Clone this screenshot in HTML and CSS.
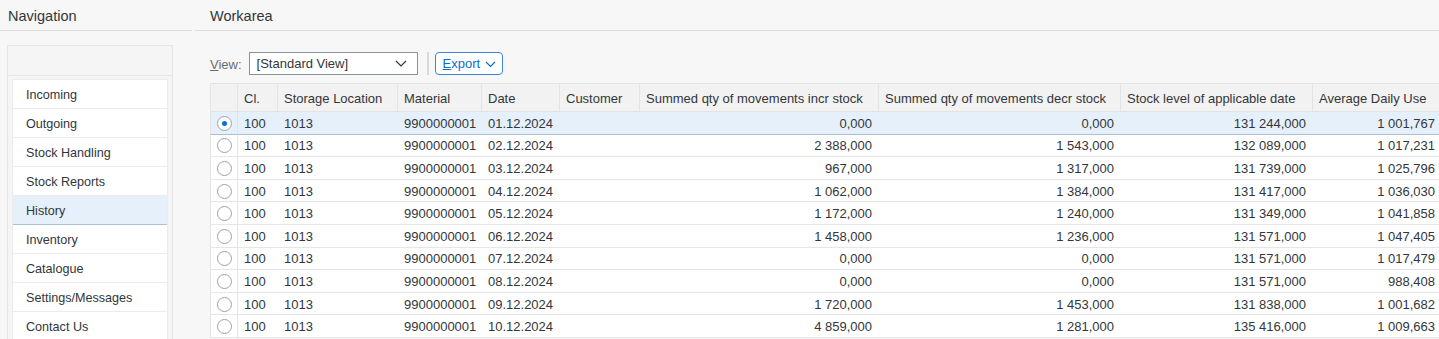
FILE: index.html
```html
<!DOCTYPE html>
<html lang="en">
<head>
<meta charset="utf-8">
<title>Stock History</title>
<link rel="stylesheet" href="styles.css">
</head>
<body>
<div class="page">
  <aside class="nav">
    <div class="pane-title">Navigation</div>
    <div class="nav-panel">
      <div class="nav-panel-head"></div>
      <ul class="nav-list">
        <li class="nav-item">Incoming</li>
        <li class="nav-item">Outgoing</li>
        <li class="nav-item">Stock Handling</li>
        <li class="nav-item">Stock Reports</li>
        <li class="nav-item nav-item-active">History</li>
        <li class="nav-item">Inventory</li>
        <li class="nav-item">Catalogue</li>
        <li class="nav-item">Settings/Messages</li>
        <li class="nav-item">Contact Us</li>
      </ul>
    </div>
  </aside>
  <main class="work">
    <div class="pane-title pane-title-work">Workarea</div>
    <div class="work-body">
      <div class="toolbar">
        <span class="view-label"><u>V</u>iew:</span>
        <div class="select">
          <span>[Standard View]</span>
          <svg class="chev" width="12" height="7" viewBox="0 0 12 7"><path d="M1 1 L6 6 L11 1" fill="none" stroke="#32363a" stroke-width="1.2"/></svg>
        </div>
        <span class="tb-sep"></span>
        <button class="btn-export"><span><u>E</u>xport</span><svg class="chev-sm" width="11" height="7" viewBox="0 0 11 7"><path d="M1 1 L5.5 5.5 L10 1" fill="none" stroke="#0a6ed1" stroke-width="1.2"/></svg></button>
      </div>
      <div class="table-wrap">
        <table class="grid">
          <colgroup>
            <col class="c-sel"><col class="c-cl"><col class="c-loc"><col class="c-mat"><col class="c-date"><col class="c-cust"><col class="c-incr"><col class="c-decr"><col class="c-lvl"><col class="c-avg">
          </colgroup>
          <thead>
            <tr>
              <th></th><th>Cl.</th><th>Storage Location</th><th>Material</th><th>Date</th><th>Customer</th><th>Summed qty of movements incr stock</th><th>Summed qty of movements decr stock</th><th>Stock level of applicable date</th><th>Average Daily Use</th>
            </tr>
          </thead>
          <tbody>
            <tr class="row-selected"><td class="sel"><span class="radio radio-on"></span></td><td>100</td><td>1013</td><td>9900000001</td><td>01.12.2024</td><td></td><td class="num">0,000</td><td class="num">0,000</td><td class="num">131 244,000</td><td class="num">1 001,767</td></tr>
            <tr><td class="sel"><span class="radio"></span></td><td>100</td><td>1013</td><td>9900000001</td><td>02.12.2024</td><td></td><td class="num">2 388,000</td><td class="num">1 543,000</td><td class="num">132 089,000</td><td class="num">1 017,231</td></tr>
            <tr><td class="sel"><span class="radio"></span></td><td>100</td><td>1013</td><td>9900000001</td><td>03.12.2024</td><td></td><td class="num">967,000</td><td class="num">1 317,000</td><td class="num">131 739,000</td><td class="num">1 025,796</td></tr>
            <tr><td class="sel"><span class="radio"></span></td><td>100</td><td>1013</td><td>9900000001</td><td>04.12.2024</td><td></td><td class="num">1 062,000</td><td class="num">1 384,000</td><td class="num">131 417,000</td><td class="num">1 036,030</td></tr>
            <tr><td class="sel"><span class="radio"></span></td><td>100</td><td>1013</td><td>9900000001</td><td>05.12.2024</td><td></td><td class="num">1 172,000</td><td class="num">1 240,000</td><td class="num">131 349,000</td><td class="num">1 041,858</td></tr>
            <tr><td class="sel"><span class="radio"></span></td><td>100</td><td>1013</td><td>9900000001</td><td>06.12.2024</td><td></td><td class="num">1 458,000</td><td class="num">1 236,000</td><td class="num">131 571,000</td><td class="num">1 047,405</td></tr>
            <tr><td class="sel"><span class="radio"></span></td><td>100</td><td>1013</td><td>9900000001</td><td>07.12.2024</td><td></td><td class="num">0,000</td><td class="num">0,000</td><td class="num">131 571,000</td><td class="num">1 017,479</td></tr>
            <tr><td class="sel"><span class="radio"></span></td><td>100</td><td>1013</td><td>9900000001</td><td>08.12.2024</td><td></td><td class="num">0,000</td><td class="num">0,000</td><td class="num">131 571,000</td><td class="num">988,408</td></tr>
            <tr><td class="sel"><span class="radio"></span></td><td>100</td><td>1013</td><td>9900000001</td><td>09.12.2024</td><td></td><td class="num">1 720,000</td><td class="num">1 453,000</td><td class="num">131 838,000</td><td class="num">1 001,682</td></tr>
            <tr><td class="sel"><span class="radio"></span></td><td>100</td><td>1013</td><td>9900000001</td><td>10.12.2024</td><td></td><td class="num">4 859,000</td><td class="num">1 281,000</td><td class="num">135 416,000</td><td class="num">1 009,663</td></tr>
          </tbody>
        </table>
      </div>
    </div>
  </main>
</div>
</body>
</html>
```

FILE: styles.css
```css
html, body {
  margin: 0;
  padding: 0;
  background: #f7f7f7;
  overflow: hidden;
}
body {
  font-family: "Liberation Sans", Arial, sans-serif;
  color: #32363a;
  font-size: 13px;
}
.page {
  display: flex;
  width: 1439px;
  height: 339px;
  overflow: hidden;
}
.nav {
  width: 192px;
  flex: 0 0 192px;
  margin-right: 3px;
}
.work {
  flex: 1 1 auto;
  min-width: 0;
  overflow: hidden;
}
.pane-title {
  height: 30px;
  line-height: 32px;
  padding-left: 8px;
  font-size: 14.5px;
  border-bottom: 1px solid #dcdcdc;
}
.pane-title-work {
  padding-left: 15px;
}
.nav-panel {
  margin: 14px 0 0 7px;
  width: 164px;
  height: 320px;
  border: 1px solid #e6e6e6;
  background: #f5f5f5;
}
.nav-panel-head {
  height: 29px;
  border-bottom: 1px solid #e6e6e6;
}
.nav-list {
  list-style: none;
  margin: 3px 4px 0 4px;
  padding: 0;
  background: #fff;
  border: 1px solid #ececec;
  border-bottom: none;
}
.nav-item {
  height: 28px;
  line-height: 30px;
  padding-left: 13px;
  border-bottom: 1px solid #ececec;
  font-size: 12.6px;
}
.nav-item-active {
  background: #e5f0fa;
  border-bottom-color: #a9c2dc;
}
.work-body {
  padding-left: 15px;
}
.toolbar {
  display: flex;
  align-items: center;
  height: 23px;
  margin-top: 21px;
}
.view-label {
  color: #6a6d70;
  margin-right: 7px;
  position: relative;
  top: 1px;
}
.select {
  box-sizing: border-box;
  width: 169px;
  height: 23px;
  border: 1px solid #89919a;
  background: #fff;
  display: flex;
  align-items: center;
  justify-content: space-between;
  padding: 0 10px 0 7px;
}
.tb-sep {
  width: 2px;
  height: 23px;
  background: #d9d9d9;
  margin: 0 6px 0 9px;
}
.btn-export {
  box-sizing: border-box;
  height: 23px;
  width: 68px;
  border: 1px solid #3f84d2;
  border-radius: 4px;
  background: #fff;
  color: #0a6ed1;
  font: inherit;
  padding: 0 0 0 7px;
  display: flex;
  align-items: center;
  gap: 5px;
  cursor: pointer;
}
.chev-sm {
  margin-top: 1px;
}
.table-wrap {
  margin-top: 8px;
  width: 1300px;
}
.grid {
  border-collapse: separate;
  border-spacing: 0;
  table-layout: fixed;
  width: 1232px;
  font-size: 13px;
}
.c-sel { width: 28px; }
.c-cl { width: 40px; }
.c-loc { width: 120px; }
.c-mat { width: 84px; }
.c-date { width: 78px; }
.c-cust { width: 80px; }
.c-incr { width: 239px; }
.c-decr { width: 242px; }
.c-lvl { width: 192px; }
.c-avg { width: 129px; }
.grid th {
  box-sizing: border-box;
  height: 29px;
  background: #f2f2f2;
  border-top: 1px solid #e3e3e3;
  border-bottom: 1px solid #e3e3e3;
  border-right: 1px solid #e3e3e3;
  font-weight: normal;
  text-align: left;
  padding: 1px 6px 0;
  white-space: nowrap;
}
.grid th:first-child {
  border-left: 1px solid #e3e3e3;
}
.grid td {
  box-sizing: border-box;
  height: 22.6px;
  padding: 1px 6px 0;
  background: #fff;
  border-bottom: 1px solid #e6e6e6;
  white-space: nowrap;
}
.grid td:first-child {
  border-left: 1px solid #e3e3e3;
  border-right: 1px solid #e3e3e3;
  padding: 0;
  text-align: center;
}
.grid td.num {
  text-align: right;
  padding-right: 7px;
}
.row-selected td {
  background: #e5f0fa;
  border-bottom-color: #a7c0da;
}
.radio {
  display: inline-block;
  box-sizing: border-box;
  width: 15px;
  height: 15px;
  border: 1px solid #9ea3a8;
  border-radius: 50%;
  background: #fff;
  vertical-align: middle;
  position: relative;
}
.radio-on::after {
  content: "";
  position: absolute;
  left: 4px;
  top: 4px;
  width: 5px;
  height: 5px;
  border-radius: 50%;
  background: #0a6ed1;
}
```
